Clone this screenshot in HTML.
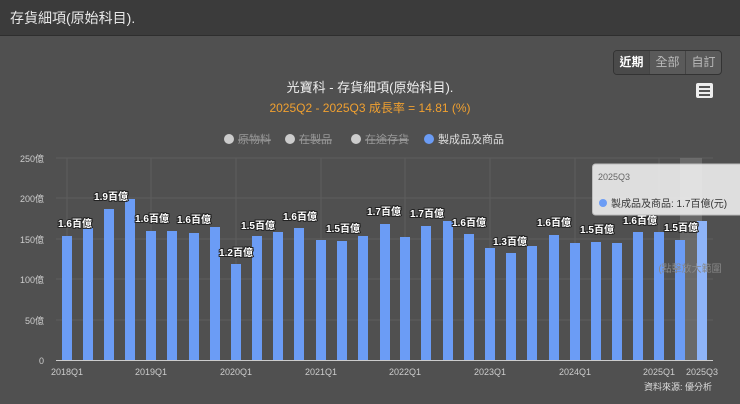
<!DOCTYPE html>
<html><head><meta charset="utf-8"><style>
body{margin:0;width:740px;height:404px;overflow:hidden;background:#505050;font-family:"Liberation Sans","Noto Sans CJK TC",sans-serif;}
.hd{position:absolute;left:0;top:0;width:740px;height:36px;background:#3b3b3b;border-bottom:1px solid #2e2e2e;color:#e8e8e8;font-size:14px;line-height:36px;padding-left:10px;box-sizing:border-box}
.btns{position:absolute;left:613px;top:50px;display:flex;border:1px solid #333;border-radius:4px;overflow:hidden;background:#5a5a5a}
.btns div{width:35px;height:23px;line-height:23px;text-align:center;font-size:12px;color:#bbb;border-left:1px solid #444}
.btns div:first-child{border-left:none;color:#fff;font-weight:bold;background:#4a4a4a}
svg{position:absolute;left:0;top:0}
</style></head><body>
<div class="hd">存貨細項(原始科目).</div>
<div class="btns"><div>近期</div><div>全部</div><div>自訂</div></div>
<svg width="740" height="404" font-family="Liberation Sans, Noto Sans CJK TC, sans-serif">
<text x="370" y="92" fill="#eee" font-size="13" text-anchor="middle">光寶科 - 存貨細項(原始科目).</text>
<text x="370" y="112" fill="#f0a030" font-size="12" text-anchor="middle">2025Q2 - 2025Q3 成長率 = 14.81 (%)</text>
<rect x="696" y="83" width="17" height="15" rx="2" fill="#eee"/>
<rect x="699" y="86" width="11" height="2" fill="#555"/><rect x="699" y="90" width="11" height="2" fill="#555"/><rect x="699" y="94" width="11" height="2" fill="#555"/>
<g font-size="11">
<circle cx="229" cy="139" r="5" fill="#ccc"/><text x="238" y="143" fill="#999" text-decoration="line-through">原物料</text>
<circle cx="290" cy="139" r="5" fill="#ccc"/><text x="299" y="143" fill="#999" text-decoration="line-through">在製品</text>
<circle cx="356" cy="139" r="5" fill="#ccc"/><text x="365" y="143" fill="#999" text-decoration="line-through">在途存貨</text>
<circle cx="429" cy="139" r="5" fill="#6b9cf5"/><text x="438" y="143" fill="#ddd">製成品及商品</text>
</g>
<g stroke="#5e5e5e" stroke-width="1">
<line x1="56" y1="158" x2="713" y2="158"/><line x1="56" y1="198" x2="713" y2="198"/><line x1="56" y1="239" x2="713" y2="239"/><line x1="56" y1="279" x2="713" y2="279"/><line x1="56" y1="320" x2="713" y2="320"/>
<line x1="67" y1="158" x2="67" y2="360"/><line x1="151" y1="158" x2="151" y2="360"/><line x1="236" y1="158" x2="236" y2="360"/><line x1="321" y1="158" x2="321" y2="360"/><line x1="405" y1="158" x2="405" y2="360"/><line x1="490" y1="158" x2="490" y2="360"/><line x1="575" y1="158" x2="575" y2="360"/><line x1="659" y1="158" x2="659" y2="360"/>
</g>
<g font-size="9" fill="#ccc" text-anchor="end">
<text x="44" y="162">250億</text><text x="44" y="202">200億</text><text x="44" y="243">150億</text><text x="44" y="283">100億</text><text x="44" y="324">50億</text><text x="44" y="364">0</text>
</g>
<rect x="680" y="158" width="22" height="202" fill="#888" opacity="0.45"/>
<g fill="#6b9cf5">
<rect x="62" y="236" width="10" height="124"/><rect x="83" y="228" width="10" height="132"/><rect x="104" y="209" width="10" height="151"/><rect x="125" y="199" width="10" height="161"/><rect x="146" y="231" width="10" height="129"/><rect x="167" y="231" width="10" height="129"/><rect x="189" y="233" width="10" height="127"/><rect x="210" y="227" width="10" height="133"/><rect x="231" y="264" width="10" height="96"/><rect x="252" y="236" width="10" height="124"/><rect x="273" y="232" width="10" height="128"/><rect x="294" y="228" width="10" height="132"/><rect x="316" y="240" width="10" height="120"/><rect x="337" y="241" width="10" height="119"/><rect x="358" y="236" width="10" height="124"/><rect x="380" y="224" width="10" height="136"/><rect x="400" y="237" width="10" height="123"/><rect x="421" y="226" width="10" height="134"/><rect x="443" y="221" width="10" height="139"/><rect x="464" y="234" width="10" height="126"/><rect x="485" y="248" width="10" height="112"/><rect x="506" y="253" width="10" height="107"/><rect x="527" y="246" width="10" height="114"/><rect x="549" y="235" width="10" height="125"/><rect x="570" y="243" width="10" height="117"/><rect x="591" y="242" width="10" height="118"/><rect x="612" y="243" width="10" height="117"/><rect x="633" y="232" width="10" height="128"/><rect x="654" y="232" width="10" height="128"/><rect x="675" y="240" width="10" height="120"/><rect x="697" y="221" width="10" height="139" fill="#8eb4f8"/>
</g>
<line x1="56" y1="360.5" x2="713" y2="360.5" stroke="#ccc"/>
<g font-size="10" font-weight="bold" fill="#fff" stroke="#222" stroke-width="2" paint-order="stroke" text-anchor="middle">
<text x="75" y="227">1.6百億</text><text x="111" y="200">1.9百億</text><text x="152" y="222">1.6百億</text><text x="194" y="223">1.6百億</text><text x="236" y="256">1.2百億</text><text x="258" y="229">1.5百億</text><text x="300" y="220">1.6百億</text><text x="343" y="232">1.5百億</text><text x="384" y="215">1.7百億</text><text x="427" y="217">1.7百億</text><text x="469" y="226">1.6百億</text><text x="510" y="245">1.3百億</text><text x="554" y="226">1.6百億</text><text x="597" y="233">1.5百億</text><text x="640" y="224">1.6百億</text><text x="681" y="231">1.5百億</text>
</g>
<g font-size="9" fill="#ccc" text-anchor="middle">
<text x="67" y="375">2018Q1</text><text x="151" y="375">2019Q1</text><text x="236" y="375">2020Q1</text><text x="321" y="375">2021Q1</text><text x="405" y="375">2022Q1</text><text x="490" y="375">2023Q1</text><text x="575" y="375">2024Q1</text><text x="659" y="375">2025Q1</text><text x="702" y="375">2025Q3</text>
</g>
<text x="712" y="390" font-size="9" fill="#ddd" text-anchor="end">資料來源: 優分析</text>
<text x="690" y="272" font-size="10" fill="#888" text-anchor="middle">(點擊放大範圍</text>
<rect x="592.5" y="164" width="150" height="51" rx="3" fill="#f2f2f2" opacity="0.88" stroke="#ccc"/>
<text x="598" y="180" font-size="9" fill="#666">2025Q3</text>
<circle cx="603" cy="203" r="4" fill="#6b9cf5"/>
<text x="611" y="207" font-size="10" fill="#333">製成品及商品: 1.7百億(元)</text>
</svg>
</body></html>
